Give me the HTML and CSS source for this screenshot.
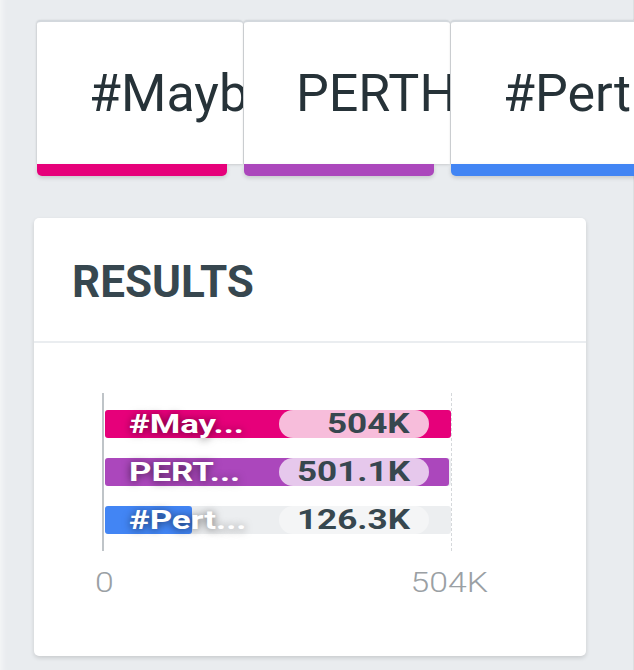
FILE: index.html
```html
<!DOCTYPE html>
<html>
<head>
<meta charset="utf-8">
<link rel="stylesheet" href="styles.css">
</head>
<body>
<div class="page">
  <div class="tabs">
    <div class="tab">
      <div class="tab-face">#Maybe</div>
      <div class="tab-bar pink"></div>
    </div>
    <div class="tab">
      <div class="tab-face">PERTH</div>
      <div class="tab-bar purple"></div>
    </div>
    <div class="tab">
      <div class="tab-face">#Perth</div>
      <div class="tab-bar blue"></div>
    </div>
  </div>

  <div class="card">
    <div class="card-head"><h2 class="card-title">RESULTS</h2></div>
    <div class="card-body">
      <div class="chart">
        <div class="plot">
          <div class="row">
            <div class="fill pink" style="width:100%"></div>
            <span class="label"><span class="stretch-l">#May...</span></span>
            <span class="pill pill-pink"><span class="stretch-r">504K</span></span>
          </div>
          <div class="row">
            <div class="fill purple" style="width:99.4%"></div>
            <span class="label"><span class="stretch-l">PERT...</span></span>
            <span class="pill pill-purple"><span class="stretch-r">501.1K</span></span>
          </div>
          <div class="row">
            <div class="fill blue" style="width:25.1%"></div>
            <span class="label"><span class="stretch-l">#Pert...</span></span>
            <span class="pill pill-grey"><span class="stretch-r">126.3K</span></span>
          </div>
        </div>
        <div class="ticks">
          <span class="stretch-l">0</span>
          <span class="stretch-r">504K</span>
        </div>
      </div>
    </div>
  </div>
</div>
</body>
</html>
```

FILE: styles.css
```css
html, body {
  margin: 0;
  padding: 0;
}
body {
  width: 634px;
  height: 670px;
  overflow: hidden;
  background: #e9ecef;
  font-family: Roboto, "Liberation Sans", sans-serif;
  box-shadow: inset 8px 0 6px -6px rgba(255,255,255,0.6), inset -7px 0 0 -6px rgba(0,0,0,0.05);
}
.page {
  padding: 20px 0 0 34px;
}
.tabs {
  display: flex;
  gap: 1px;
  margin-left: 3px;
  width: 700px;
}
.tab {
  flex: none;
  width: 206px;
}
.tab-face {
  box-sizing: border-box;
  height: 144px;
  background: #fff;
  border-top: 2px solid #d3d8dd;
  border-radius: 4px 4px 0 0;
  box-shadow: 0 1px 3px rgba(0,0,0,0.12), -1px 0 2px rgba(0,0,0,0.06);
  display: flex;
  align-items: center;
  padding-left: 52px;
  overflow: hidden;
  white-space: nowrap;
  font-size: 52px;
  color: #263238;
}
.tab-bar {
  width: 190px;
  height: 12px;
  border-radius: 0 0 5px 5px;
  box-shadow: 0 2px 4px rgba(0,0,0,0.15);
}
.pink { background: #e6007a; }
.purple { background: #ab47bc; }
.blue { background: #4285f4; }

.card {
  margin-top: 42px;
  width: 552px;
  height: 438px;
  background: #fff;
  border-radius: 5px;
  box-shadow: 0 2px 4px rgba(0,0,0,0.14);
}
.card-head {
  height: 123px;
  display: flex;
  align-items: center;
  padding-left: 38px;
  border-bottom: 2px solid #eaedf0;
}
.card-title {
  margin: 4px 0 0;
  font-size: 44px;
  font-weight: 700;
  color: #37474f;
  letter-spacing: 0;
}
.card-body {
  padding: 50px 0 0 68px;
}
.chart {
  width: 360px;
}
.plot {
  width: 347px;
  border-left: 2px solid #bfc4c8;
  border-right: 1px dashed #d5d8db;
  padding: 17px 0 17px;
  display: flex;
  flex-direction: column;
  gap: 20px;
}
.row {
  position: relative;
  height: 28px;
  margin-left: 1px;
  background: #eceef0;
  border-radius: 3px;
  display: flex;
  align-items: center;
}
.fill {
  position: absolute;
  left: 0;
  top: 0;
  bottom: 0;
  border-radius: 3px;
}
.label {
  position: relative;
  width: 150px;
  padding-left: 24px;
  box-sizing: border-box;
  font-size: 26px;
  font-weight: 700;
  color: #fff;
  white-space: nowrap;
  text-shadow: 0 1px 7px rgba(0,0,0,0.6);
  line-height: 28px;
}
.label .stretch-l {
  transform: scaleX(1.34);
}
.pill {
  position: relative;
  margin-left: 24px;
  width: 150px;
  height: 28px;
  border-radius: 14px;
  box-sizing: border-box;
  padding-right: 19px;
  text-align: right;
  font-size: 27px;
  font-weight: 700;
  color: #37474f;
  line-height: 29px;
}
.pill .stretch-r {
  transform: scaleX(1.3);
}
.pill-pink { background: #f7bddb; }
.pill-purple { background: #e6c8ec; }
.pill-grey { background: #f4f5f6; }
.stretch-l,
.stretch-r {
  display: inline-block;
  transform: scaleX(1.25);
}
.stretch-l { transform-origin: left center; }
.stretch-r { transform-origin: right center; }

.ticks {
  margin-left: -7px;
  width: 393px;
  margin-top: 19px;
  display: flex;
  justify-content: space-between;
  font-size: 27px;
  font-weight: 300;
  color: #9aa0a4;
  line-height: 1;
}
```
